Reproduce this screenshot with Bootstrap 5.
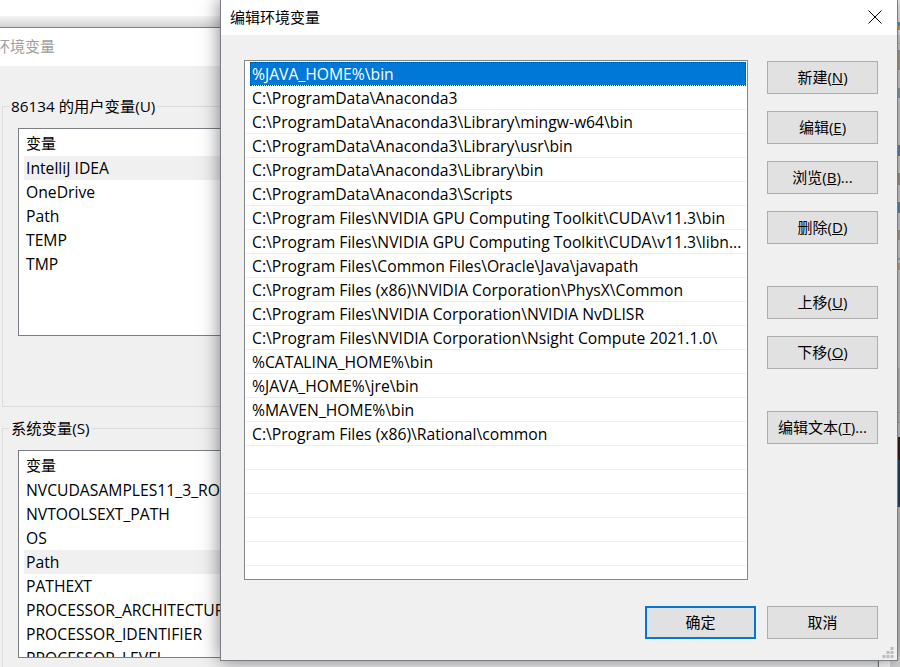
<!doctype html>
<html lang="zh">
<head>
<meta charset="utf-8">
<title>编辑环境变量</title>
<link href="https://cdn.jsdelivr.net/npm/bootstrap@5.3.0/dist/css/bootstrap.min.css" rel="stylesheet">
<style>
html,body{height:100%;margin:0}
body{position:relative;width:900px;height:667px;overflow:hidden;background:#fff;color:#000;
  font-family:"Open Sans","Noto Sans CJK SC",sans-serif;font-size:15px;line-height:24px}
.desk-edge{position:absolute;left:890px;top:0;width:10px;height:667px;background:linear-gradient(#fff 0 22px,#6f9fc8 22px 26px,#d9b070 26px 30px,#fff 30px 35px,#e2e2e2 35px 43px,#c4c4c4 43px 44px,#e2e2e2 44px 50px,#b5aca0 50px 70px,#e2e2e2 70px 88px,#9aa6b2 88px 98px,#e2e2e2 98px 145px,#6c93b8 145px 156px,#e2e2e2 156px 173px,#a8a298 173px 185px,#e2e2e2 185px 202px,#6c93b8 202px 213px,#e2e2e2 213px 230px,#b5aca0 230px 240px,#e2e2e2 240px 258px,#b0b0b0 258px 260px,#e2e2e2 260px 263px,#c8b898 263px 270px,#e2e2e2 270px 368px,#c9c9c9 368px 412px,#a8a8a8 412px 413px,#c9c9c9 413px 422px,#a8a8a8 422px 423px,#d6d6d6 423px 437px,#3a2018 437px 460px,#1f4e79 460px 507px,#d8d8d8 507px)}
.back-shadow{position:absolute;left:0;top:16px;width:890px;height:11px;background:linear-gradient(#f4f4f4,#d2d2d2)}
.back-win{position:absolute;left:-1px;top:27px;width:880px;height:640px;overflow:hidden;background:#f0f0f0;border:1px solid #7a7f85;border-bottom:0;display:flex;flex-direction:column}
.back-title{height:38px;flex:none;background:#fff;color:#a0a0a0;font-size:15px;line-height:36px;white-space:nowrap;text-indent:-5px}
.back-body{padding:0 0 0 2px;flex:1;display:flex;flex-direction:column}
.grp{position:relative;flex:none;border:1px solid #dcdcdc;border-radius:0}
.grp-user{margin-top:40px;height:301px;padding:21px 0 0 15px}
.grp-sys{margin-top:21px;height:300px;padding:21px 0 0 15px}
.grp-cap{position:absolute;left:6px;top:-13px;background:#f0f0f0;padding:0 2px;white-space:nowrap;line-height:24px;font-size:15.3px}
.var-list{height:208px;background:#fff;border:1px solid #7a7f85;padding:3px 0 0 5px;overflow:hidden;font-size:15.7px}
.var-row{height:24px;padding-left:2px;white-space:nowrap;overflow:hidden}
.var-head{line-height:22px;font-size:15px}
.var-on{background:#f0f0f0}
.edit-win{position:absolute;left:220px;top:-1px;width:678px;height:662px;background:#f0f0f0;border:1px solid #7a7f85;
  box-shadow:0 0 18px rgba(0,0,0,.5);display:flex;flex-direction:column}
.edit-title{height:35px;flex:none;background:#fff;display:flex;align-items:center;justify-content:space-between;padding:0 15px 2px 9px;font-size:15px}
.edit-main{display:flex;flex:none;height:545px;padding:25px 0 0 23px;gap:19px}
.path-list{width:504px;height:520px;flex:none;background:#fff;border:1px solid #82878c;border-radius:0;padding:1px 1px 0 1px;overflow:hidden;display:block;font-size:15.7px}
.path-list .list-group-item{height:24px;padding:0 0 0 6px;border:0;border-bottom:1px solid #f0f0f0;border-radius:0;background:#fff;color:#000;white-space:nowrap;overflow:hidden;line-height:25px}
.path-list .list-group-item.active{background:#0078d7;color:#fff;margin-left:4px;padding-left:2px;margin-bottom:0;border-bottom-color:#fff;outline:1px dotted #5a3a10;outline-offset:-1px}
.side-btns{display:flex;flex-direction:column;width:111px;padding-top:1px}
.dlg-btn{width:111px;height:33px;flex:none;padding:0;background:#e1e1e1;border:1px solid #adadad;border-radius:0;color:#000;font-size:15px;line-height:31px;white-space:nowrap;--bs-btn-hover-bg:#e1e1e1}
.gap-sm{margin-top:17px}
.gap-lg{margin-top:42px}
.foot-btns{display:flex;justify-content:flex-end;gap:11px;padding:0 19px 0 0;margin-top:26px}
.dlg-main{border:2px solid #0078d7;line-height:29px}
.x-icon{display:block}
.grip{position:absolute;right:3px;bottom:1px}
</style>
</head>
<body>
<div class="desk-edge"></div>
<div class="back-shadow"></div>
<div class="back-win">
  <div class="back-title">环境变量</div>
  <div class="back-body">
    <div class="grp grp-user">
      <span class="grp-cap">86134 的用户变量(U)</span>
      <div class="var-list">
        <div class="var-row var-head">变量</div>
        <div class="var-row var-on">IntelliJ IDEA</div>
        <div class="var-row">OneDrive</div>
        <div class="var-row">Path</div>
        <div class="var-row">TEMP</div>
        <div class="var-row">TMP</div>
      </div>
    </div>
    <div class="grp grp-sys">
      <span class="grp-cap">系统变量(S)</span>
      <div class="var-list">
        <div class="var-row var-head">变量</div>
        <div class="var-row">NVCUDASAMPLES11_3_ROOT</div>
        <div class="var-row">NVTOOLSEXT_PATH</div>
        <div class="var-row">OS</div>
        <div class="var-row var-on">Path</div>
        <div class="var-row">PATHEXT</div>
        <div class="var-row">PROCESSOR_ARCHITECTURE</div>
        <div class="var-row">PROCESSOR_IDENTIFIER</div>
        <div class="var-row">PROCESSOR_LEVEL</div>
      </div>
    </div>
  </div>
</div>
<div class="edit-win">
  <div class="edit-title">
    <span>编辑环境变量</span>
    <svg class="x-icon" width="14" height="14" viewBox="0 0 14 14" aria-label="关闭"><path d="M.5.5l13 13M13.5.5l-13 13" stroke="#000" stroke-width="1" fill="none"/></svg>
  </div>
  <div class="edit-main">
    <ul class="list-group path-list">
      <li class="list-group-item active">%JAVA_HOME%\bin</li>
      <li class="list-group-item">C:\ProgramData\Anaconda3</li>
      <li class="list-group-item">C:\ProgramData\Anaconda3\Library\mingw-w64\bin</li>
      <li class="list-group-item">C:\ProgramData\Anaconda3\Library\usr\bin</li>
      <li class="list-group-item">C:\ProgramData\Anaconda3\Library\bin</li>
      <li class="list-group-item">C:\ProgramData\Anaconda3\Scripts</li>
      <li class="list-group-item">C:\Program Files\NVIDIA GPU Computing Toolkit\CUDA\v11.3\bin</li>
      <li class="list-group-item">C:\Program Files\NVIDIA GPU Computing Toolkit\CUDA\v11.3\libn...</li>
      <li class="list-group-item">C:\Program Files\Common Files\Oracle\Java\javapath</li>
      <li class="list-group-item">C:\Program Files (x86)\NVIDIA Corporation\PhysX\Common</li>
      <li class="list-group-item">C:\Program Files\NVIDIA Corporation\NVIDIA NvDLISR</li>
      <li class="list-group-item">C:\Program Files\NVIDIA Corporation\Nsight Compute 2021.1.0\</li>
      <li class="list-group-item">%CATALINA_HOME%\bin</li>
      <li class="list-group-item">%JAVA_HOME%\jre\bin</li>
      <li class="list-group-item">%MAVEN_HOME%\bin</li>
      <li class="list-group-item">C:\Program Files (x86)\Rational\common</li>
      <li class="list-group-item"></li>
      <li class="list-group-item"></li>
      <li class="list-group-item"></li>
      <li class="list-group-item"></li>
      <li class="list-group-item"></li>
    </ul>
    <div class="side-btns">
      <button type="button" class="btn dlg-btn">新建(<u>N</u>)</button>
      <button type="button" class="btn dlg-btn gap-sm">编辑(<u>E</u>)</button>
      <button type="button" class="btn dlg-btn gap-sm">浏览(<u>B</u>)...</button>
      <button type="button" class="btn dlg-btn gap-sm">删除(<u>D</u>)</button>
      <button type="button" class="btn dlg-btn gap-lg">上移(<u>U</u>)</button>
      <button type="button" class="btn dlg-btn gap-sm">下移(<u>O</u>)</button>
      <button type="button" class="btn dlg-btn gap-lg">编辑文本(<u>T</u>)...</button>
    </div>
  </div>
  <div class="foot-btns">
    <button type="button" class="btn dlg-btn dlg-main">确定</button>
    <button type="button" class="btn dlg-btn">取消</button>
  </div>
  <svg class="grip" width="12" height="12" viewBox="0 0 12 12" aria-hidden="true"><path fill="#bcbcbc" d="M8.500 0h3v3h-3zM4.500 4h3v3h-3zM8.500 4h3v3h-3zM.5 8h3v3h-3zM4.500 8h3v3h-3zM8.500 8h3v3h-3z"/></svg>
</div>
</body>
</html>
